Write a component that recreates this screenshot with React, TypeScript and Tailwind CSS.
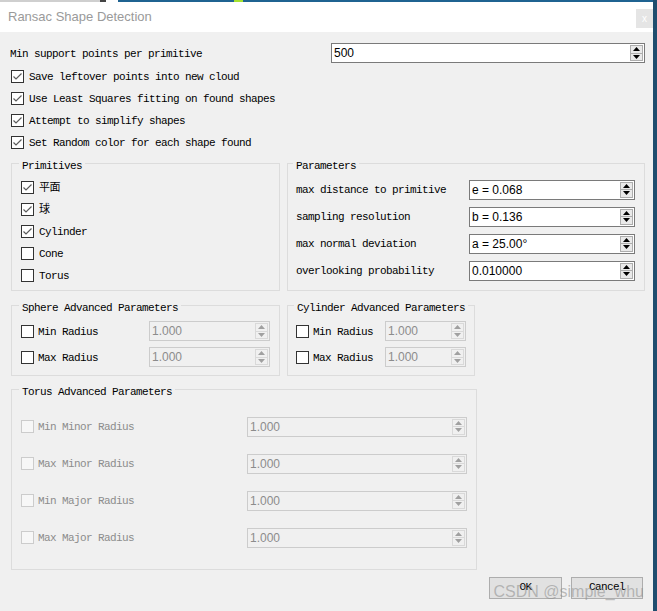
import clsx from 'clsx';
import type { ReactNode } from 'react';

const MONO = "font-['Liberation_Mono','Noto_Sans_CJK_SC',monospace] text-[11px] tracking-[-0.6px] leading-none pt-[2px]";
const SANS = "font-['Liberation_Sans',sans-serif] text-[12px] leading-none";

function CheckBox({ checked = false, disabled = false }: { checked?: boolean; disabled?: boolean }) {
  return (
    <span
      className={clsx(
        'flex h-[13px] w-[13px] shrink-0 items-center justify-center border',
        disabled ? 'border-[#cccccc] bg-[#f7f7f7]' : 'border-[#333333] bg-white'
      )}
    >
      {checked && (
        <svg width="11" height="11" viewBox="0 0 11 11">
          <path d="M1.5 5.5 L4 8 L9.5 2.5" fill="none" stroke="#5c5c5c" strokeWidth="1.2" />
        </svg>
      )}
    </span>
  );
}

function CheckRow({
  label,
  checked,
  disabled,
  gap = 'gap-[5px]',
  className,
}: {
  label: string;
  checked?: boolean;
  disabled?: boolean;
  gap?: string;
  className?: string;
}) {
  return (
    <div className={clsx('flex items-center', gap, className)}>
      <CheckBox checked={checked} disabled={disabled} />
      <span className={clsx(MONO, disabled ? 'text-[#8c8c8c]' : 'text-black')}>{label}</span>
    </div>
  );
}

function Arrow({ up, fill }: { up?: boolean; fill: string }) {
  return (
    <svg width="7" height="4" viewBox="0 0 7 4">
      <path d={up ? 'M0 4 L3.5 0 L7 4 Z' : 'M0 0 L3.5 4 L7 0 Z'} fill={fill} />
    </svg>
  );
}

function SpinBox({ value, className, disabled = false }: { value: string; className?: string; disabled?: boolean }) {
  const half = disabled ? 'border-[#d9d9d9] bg-[#f0f0f0]' : 'border-[#adadad] bg-[#e9e9e9]';
  const fill = disabled ? '#a0a0a0' : '#000000';
  return (
    <div
      className={clsx(
        'flex h-[20px] items-center border pl-[2px] pr-[1px]',
        disabled ? 'border-[#cccccc] bg-[#f0f0f0] text-[#8c8c8c]' : 'border-[#7a7a7a] bg-white text-black',
        className
      )}
    >
      <span className={clsx(SANS, 'flex-1')}>{value}</span>
      <div className="flex h-[16px] w-[13px] flex-col">
        <div className={clsx('flex flex-1 items-center justify-center border', half)}>
          <Arrow up fill={fill} />
        </div>
        <div className={clsx('-mt-px flex flex-1 items-center justify-center border', half)}>
          <Arrow fill={fill} />
        </div>
      </div>
    </div>
  );
}

function Group({
  title,
  className,
  legendMl,
  children,
}: {
  title: string;
  className: string;
  legendMl: string;
  children: ReactNode;
}) {
  return (
    <fieldset className={clsx('shrink-0 border border-[#dcdcdc]', className)}>
      <legend
        className={clsx(
          "h-[14px] px-[3px] pt-[3px] font-['Liberation_Mono',monospace] text-[11px] leading-[14px] tracking-[-0.6px] text-black",
          legendMl
        )}
      >
        {title}
      </legend>
      {children}
    </fieldset>
  );
}

export default function App() {
  return (
    <div className="relative flex h-[611px] w-[657px] overflow-hidden bg-[#f0f0f0]">
      <div className="flex w-[653px] flex-col">
        <div className="flex h-[2px]">
          <div className="w-[100px] bg-[#cfcfcf]" />
          <div className="w-[6px] bg-[#444444]" />
          <div className="w-[12px] bg-white" />
          <div className="w-[116px] bg-[#1f6391]" />
          <div className="w-[9px] bg-[#a6e22e]" />
          <div className="flex-1 bg-[#1f6391]" />
        </div>

        <div className="flex h-[30px] bg-white pl-[8px]">
          <span className="self-center font-['Liberation_Sans',sans-serif] text-[13px] text-[#9a9a9a]">
            Ransac Shape Detection
          </span>
          <div className="ml-auto mt-[7px] flex h-[19px] w-[17px] items-center justify-center bg-[#e5e5e5] font-['Liberation_Sans',sans-serif] text-[10px] text-white">
            x
          </div>
        </div>

        <div className="flex flex-1 flex-col pl-[10px] pr-[8px]">
          <div className="mt-[11px] flex h-[20px] items-center">
            <span className={MONO}>Min support points per primitive</span>
            <SpinBox value="500" className="ml-auto w-[314px]" />
          </div>

          <div className="mt-[2px] flex flex-col pl-[1px]">
            <CheckRow label="Save leftover points into new cloud" checked className="h-[22px]" />
            <CheckRow label="Use Least Squares fitting on found shapes" checked className="h-[22px]" />
            <CheckRow label="Attempt to simplify shapes" checked className="h-[22px]" />
            <CheckRow label="Set Random color for each shape found" checked className="h-[22px]" />
          </div>

          <div className="ml-[1px] mt-[3px] flex gap-[7px]">
            <Group title="Primitives" className="h-[135px] w-[269px]" legendMl="ml-[7px]">
              <div className="flex flex-col pl-[9px] pt-[6px]">
                <CheckRow label="平面" checked className="h-[22px]" />
                <CheckRow label="球" checked className="h-[22px]" />
                <CheckRow label="Cylinder" checked className="h-[22px]" />
                <CheckRow label="Cone" className="h-[22px]" />
                <CheckRow label="Torus" className="h-[22px]" />
              </div>
            </Group>
            <Group title="Parameters" className="h-[135px] w-[358px]" legendMl="ml-[5px]">
              <div className="flex flex-col pl-[8px] pr-[9px] pt-[6px]">
                {[
                  ['max distance to primitive', 'e = 0.068'],
                  ['sampling resolution', 'b = 0.136'],
                  ['max normal deviation', 'a = 25.00°'],
                  ['overlooking probability', '0.010000'],
                ].map(([label, value]) => (
                  <div key={label} className="flex h-[27px] items-center">
                    <span className={MONO}>{label}</span>
                    <SpinBox value={value} className="ml-auto w-[166px]" />
                  </div>
                ))}
              </div>
            </Group>
          </div>

          <div className="ml-[1px] mt-[7px] flex gap-[7px]">
            <Group title="Sphere Advanced Parameters" className="h-[78px] w-[269px]" legendMl="ml-[7px]">
              <div className="flex flex-col pl-[9px] pr-[9px] pt-[6px]">
                {['Min Radius', 'Max Radius'].map((label) => (
                  <div key={label} className="flex h-[26px] items-center">
                    <CheckRow label={label} gap="gap-[4px]" />
                    <SpinBox value="1.000" disabled className="ml-auto w-[121px]" />
                  </div>
                ))}
              </div>
            </Group>
            <Group title="Cylinder Advanced Parameters" className="h-[78px] w-[188px]" legendMl="ml-[6px]">
              <div className="flex flex-col pl-[8px] pr-[8px] pt-[6px]">
                {['Min Radius', 'Max Radius'].map((label) => (
                  <div key={label} className="flex h-[26px] items-center">
                    <CheckRow label={label} gap="gap-[4px]" />
                    <SpinBox value="1.000" disabled className="ml-auto w-[81px]" />
                  </div>
                ))}
              </div>
            </Group>
          </div>

          <div className="ml-[1px] mt-[6px] flex">
            <Group title="Torus Advanced Parameters" className="h-[188px] w-[466px]" legendMl="ml-[7px]">
              <div className="flex flex-col pl-[9px] pr-[9px] pt-[12px]">
                {['Min Minor Radius', 'Max Minor Radius', 'Min Major Radius', 'Max Major Radius'].map((label) => (
                  <div key={label} className="flex h-[37px] items-center">
                    <CheckRow label={label} disabled gap="gap-[4px]" />
                    <SpinBox value="1.000" disabled className="ml-auto w-[220px]" />
                  </div>
                ))}
              </div>
            </Group>
          </div>

          <div className="mr-[2px] mt-[7px] flex justify-end gap-[9px]">
            <button className={clsx(MONO, 'h-[22px] w-[73px] border border-[#adadad] bg-[#e1e1e1] pb-[3px] text-black')}>
              OK
            </button>
            <button className={clsx(MONO, 'h-[22px] w-[72px] border border-[#adadad] bg-[#e1e1e1] pb-[3px] text-black')}>
              Cancel
            </button>
          </div>
        </div>
      </div>
      <div className="w-[4px] bg-[#1f4d6e]" />

      <div className="pointer-events-none absolute bottom-[11px] right-[13px] font-['Liberation_Sans',sans-serif] text-[16px] leading-none text-[rgba(140,140,140,0.55)]">
        CSDN @simple_whu
      </div>
    </div>
  );
}
